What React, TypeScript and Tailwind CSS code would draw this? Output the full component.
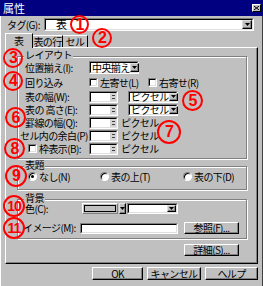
import React from "react";

function Arrow() {
  return (
    <svg width="5" height="3" viewBox="0 0 5 3" className="block">
      <path d="M0 0H5L2.5 3Z" fill="#000" />
    </svg>
  );
}

function DropBtn({ className = "" }: { className?: string }) {
  return (
    <div
      className={`flex items-center justify-center shrink-0 bg-[#c0c0c0] border border-t-[#dfdfdf] border-l-[#dfdfdf] border-b-black border-r-black shadow-[inset_-1px_-1px_#808080] ${className}`}
    >
      <Arrow />
    </div>
  );
}

function Sunken({
  className = "",
  inner = "",
  children,
}: {
  className?: string;
  inner?: string;
  children?: React.ReactNode;
}) {
  return (
    <div className={`shrink-0 border border-t-[#808080] border-l-[#808080] border-b-white border-r-white ${className}`}>
      <div className={`w-full h-full border border-t-black border-l-black border-b-[#dfdfdf] border-r-[#dfdfdf] ${inner}`}>
        {children}
      </div>
    </div>
  );
}

function Select({ text, className = "" }: { text: string; className?: string }) {
  return (
    <Sunken className={className} inner="bg-white flex items-center">
      <span className="flex-1 pl-[1px] leading-none whitespace-nowrap overflow-visible">{text}</span>
      <DropBtn className="w-[9px] h-full" />
    </Sunken>
  );
}

function Spin() {
  return (
    <Sunken className="w-[29px] h-[12px]" inner="bg-white flex justify-end">
      <div className="w-[6px] h-full bg-[#d4d4d4] flex flex-col items-center justify-center gap-[2px]">
        <div className="w-[3px] h-px bg-[#404040]" />
        <div className="w-[3px] h-px bg-[#404040]" />
      </div>
    </Sunken>
  );
}

function Check() {
  return <Sunken className="w-[9px] h-[9px]" inner="bg-white" />;
}

function Radio({ on = false }: { on?: boolean }) {
  return (
    <div className="w-[9px] h-[9px] shrink-0 rounded-full bg-white border border-t-[#808080] border-l-[#808080] border-b-white border-r-white shadow-[inset_1px_1px_#000] flex items-center justify-center">
      {on && <div className="w-[3px] h-[3px] rounded-full bg-black" />}
    </div>
  );
}

function Btn({ children, className = "" }: { children: React.ReactNode; className?: string }) {
  return (
    <div
      className={`shrink-0 flex items-center justify-center bg-[#c0c0c0] border border-t-white border-l-white border-b-black border-r-black shadow-[inset_-1px_-1px_#808080] leading-none whitespace-nowrap ${className}`}
    >
      {children}
    </div>
  );
}

function Group({
  label,
  className = "",
  children,
}: {
  label: string;
  className?: string;
  children?: React.ReactNode;
}) {
  return (
    <div className={`relative w-[230px] border border-[#808080] shadow-[inset_1px_1px_#fff,1px_1px_#fff] ${className}`}>
      <span className="absolute left-[6px] -top-[7px] bg-[#c0c0c0] px-[1px] leading-none">{label}</span>
      {children}
    </div>
  );
}

const marks = [
  { n: "1", x: 70, y: 15, s: 19 },
  { n: "2", x: 92, y: 28, s: 20 },
  { n: "3", x: 3, y: 48, s: 20 },
  { n: "4", x: 3, y: 71, s: 20 },
  { n: "5", x: 182, y: 90, s: 21 },
  { n: "6", x: 5, y: 107, s: 21 },
  { n: "7", x: 157, y: 120, s: 24 },
  { n: "8", x: 4, y: 138, s: 21 },
  { n: "9", x: 5, y: 165, s: 22 },
  { n: "10", x: 3, y: 195, s: 22 },
  { n: "11", x: 3, y: 217, s: 22 },
];

export default function App() {
  return (
    <div className="relative w-[263px] h-[286px] overflow-hidden bg-[#c0c0c0] flex flex-col text-[10px] tracking-[-0.6px] text-black font-['Noto_Sans_CJK_JP',sans-serif]">
      {/* title bar */}
      <div className="h-[16px] shrink-0 bg-[#000080] flex items-center justify-between pl-[3px] pr-[2px]">
        <span className="text-white text-[11px] leading-none tracking-normal">属性</span>
        <div className="w-[9px] h-[8px] bg-[#c0c0c0] border border-t-white border-l-white border-b-black border-r-black flex items-center justify-center">
          <svg width="5" height="4" viewBox="0 0 5 4" className="block">
            <path d="M0 0L5 4M5 0L0 4" stroke="#000" strokeWidth="1" />
          </svg>
        </div>
      </div>

      <div className="flex-1 flex flex-col border-l border-l-white border-r border-r-[#404040] pl-[4px]">
        {/* tag row */}
        <div className="mt-[2px] h-[13px] flex items-center">
          <span className="w-[39px] pl-[2px] leading-none whitespace-nowrap">タグ(G):</span>
          <Sunken className="w-[210px] h-[13px]" inner="bg-white flex items-center">
            <span className="flex-1 pl-[10px] leading-none text-[11px]">表</span>
            <DropBtn className="w-[10px] h-full" />
          </Sunken>
        </div>

        {/* tabs */}
        <div className="mt-[2px] h-[14px] flex items-start">
          <div className="relative z-10 w-[28px] h-[15px] bg-[#c0c0c0] border-t border-l border-t-white border-l-white border-r border-r-black flex items-center pl-[8px] leading-none">
            表
          </div>
          <div className="mt-[2px] w-[30px] h-[12px] border-t border-t-white border-r border-r-black flex items-center justify-center leading-none whitespace-nowrap">
            表の行
          </div>
          <div className="mt-[2px] w-[25px] h-[12px] border-t border-t-white border-r border-r-black flex items-center justify-center leading-none whitespace-nowrap">
            セル
          </div>
        </div>

        {/* panel */}
        <div className="w-[253px] h-[217px] flex flex-col pl-[11px] border border-t-white border-l-white border-b-black border-r-black shadow-[inset_-1px_-1px_#808080]">
          <Group label="レイアウト" className="mt-[8px] h-[103px] pl-[7px]">
            <div className="mt-[4px] h-[13px] flex items-center">
              <span className="w-[64px] leading-none whitespace-nowrap">位置揃え(I):</span>
              <Select text="中央揃え" className="w-[50px] h-[13px]" />
            </div>
            <div className="mt-[2px] h-[13px] flex items-center">
              <span className="w-[64px] leading-none">回り込み</span>
              <div className="w-[59px] flex items-center gap-[2px]">
                <Check />
                <span className="leading-none whitespace-nowrap">左寄せ(L)</span>
              </div>
              <div className="flex items-center gap-[2px]">
                <Check />
                <span className="leading-none whitespace-nowrap">右寄せ(R)</span>
              </div>
            </div>
            <div className="mt-[1px] h-[13px] flex items-center">
              <span className="w-[64px] leading-none whitespace-nowrap">表の幅(W):</span>
              <Spin />
              <Select text="ピクセル" className="ml-[10px] w-[50px] h-[12px]" />
            </div>
            <div className="h-[13px] flex items-center">
              <span className="w-[64px] leading-none whitespace-nowrap">表の 高さ(E):</span>
              <Spin />
              <Select text="ピクセル" className="ml-[10px] w-[50px] h-[12px]" />
            </div>
            <div className="h-[13px] flex items-center">
              <span className="w-[64px] leading-none whitespace-nowrap">罫線の幅(Q):</span>
              <Spin />
              <span className="ml-[3px] leading-none whitespace-nowrap">ピクセル</span>
            </div>
            <div className="h-[13px] flex items-center">
              <span className="-ml-[5px] w-[69px] leading-none whitespace-nowrap">セル内の余白(P)</span>
              <Spin />
              <span className="ml-[3px] leading-none whitespace-nowrap">ピクセル</span>
            </div>
            <div className="h-[13px] flex items-center">
              <div className="w-[64px] pl-[3px] flex items-center gap-[2px]">
                <Check />
                <span className="leading-none whitespace-nowrap">枠表示(B):</span>
              </div>
              <Spin />
              <span className="ml-[3px] leading-none whitespace-nowrap">ピクセル</span>
            </div>
          </Group>

          <Group label="表題" className="mt-[7px] h-[24px]">
            <div className="mt-[3px] h-[13px] flex items-center pl-[10px]">
              <div className="w-[72px] flex items-center gap-[2px]">
                <Radio on />
                <span className="leading-none whitespace-nowrap">なし(N)</span>
              </div>
              <div className="w-[83px] flex items-center gap-[2px]">
                <Radio />
                <span className="leading-none whitespace-nowrap">表の上(T)</span>
              </div>
              <div className="flex items-center gap-[2px]">
                <Radio />
                <span className="leading-none whitespace-nowrap">表の下(D)</span>
              </div>
            </div>
          </Group>

          <Group label="背景" className="mt-[9px] h-[40px] pl-[7px]">
            <div className="mt-[3px] h-[11px] flex items-center">
              <span className="w-[57px] leading-none whitespace-nowrap">色(C):</span>
              <div className="w-[44px] h-[11px] flex items-stretch gap-[1px]">
                <div className="flex-1 p-[1px] border border-t-white border-l-white border-b-[#808080] border-r-[#808080]">
                  <div className="w-full h-full border border-black bg-[#c0c0c0]" />
                </div>
                <DropBtn className="w-[7px]" />
              </div>
              <Select text="" className="ml-[1px] w-[51px] h-[11px]" />
            </div>
            <div className="mt-[8px] h-[12px] flex items-center">
              <span className="-ml-[2px] w-[57px] leading-none whitespace-nowrap">イメージ(M):</span>
              <Sunken className="w-[98px] h-[11px]" inner="bg-white" />
              <Btn className="ml-[6px] w-[55px] h-[12px]">参照(F)...</Btn>
            </div>
          </Group>

          <div className="mt-[5px] w-[230px] h-[12px] flex justify-end pr-[8px]">
            <Btn className="w-[55px] h-[12px]">詳細(S)...</Btn>
          </div>
        </div>

        {/* bottom buttons */}
        <div className="mt-[3px] h-[13px] flex gap-[4px] pl-[87px]">
          <Btn className="w-[51px] h-[13px]">OK</Btn>
          <Btn className="w-[54px] h-[13px]">キャンセル</Btn>
          <Btn className="w-[53px] h-[13px]">ヘルプ</Btn>
        </div>
      </div>

      {/* red annotation circles */}
      {marks.map((m) => (
        <div
          key={m.n}
          className="absolute rounded-full border-2 border-[#ff0000] flex items-center justify-center text-[#ff0000] font-['Liberation_Sans',sans-serif] font-bold leading-none tracking-[-1px]"
          style={{
            left: m.x,
            top: m.y,
            width: m.s,
            height: m.s,
            fontSize: m.n.length > 1 ? 14 : 16,
          }}
        >
          {m.n}
        </div>
      ))}
    </div>
  );
}
